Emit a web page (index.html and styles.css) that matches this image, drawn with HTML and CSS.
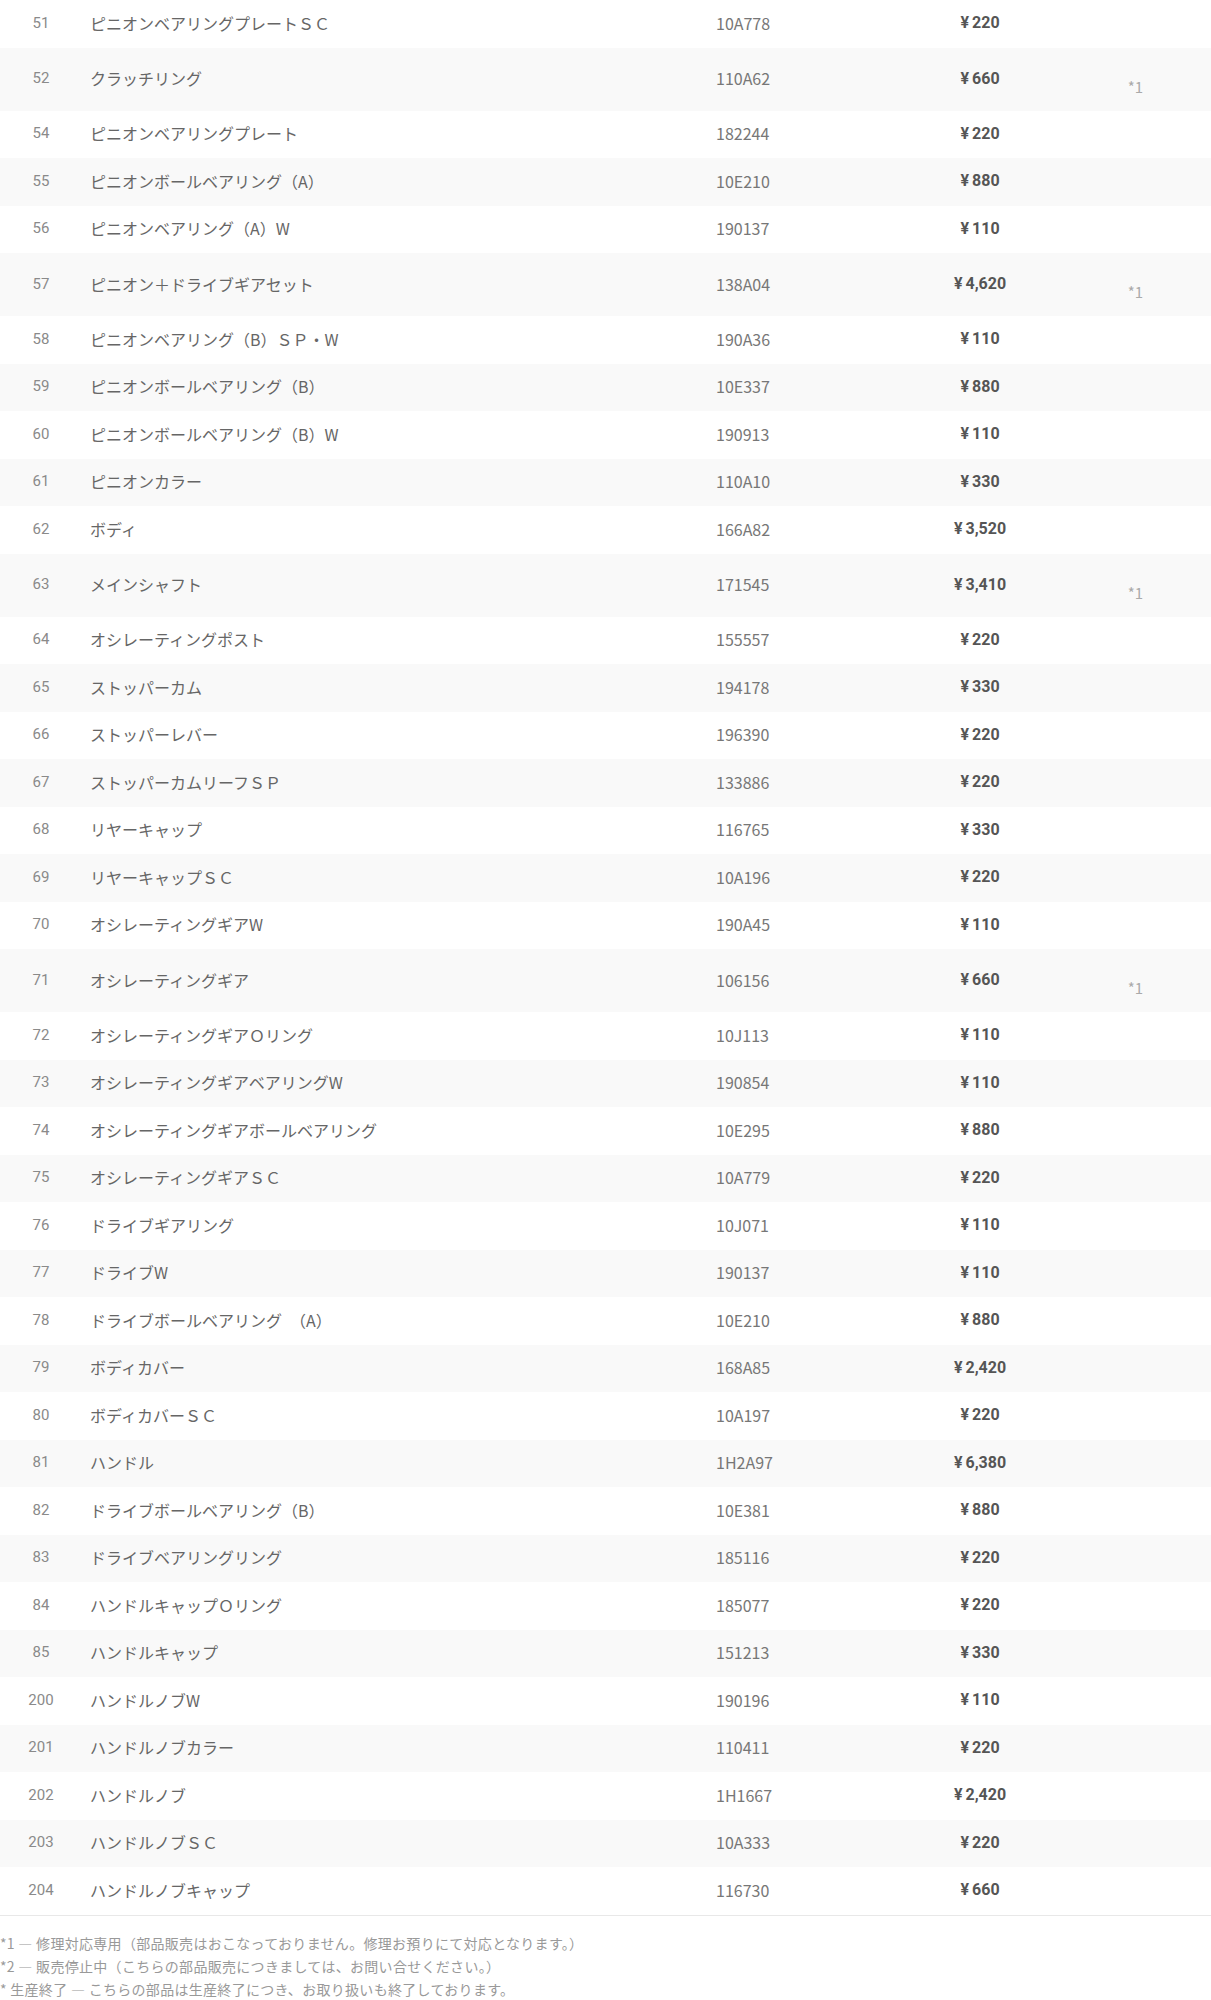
FILE: index.html
```html
<!DOCTYPE html>
<html lang="ja">
<head>
  <meta charset="UTF-8" />
  <meta name="viewport" content="width=device-width, initial-scale=1" />
  <title>パーツリスト</title>
  <link rel="stylesheet" href="styles.css">
</head>
<body>

  <!-- Parts list -->
  <div class="parts-list">
    <div class="part-row"><span class="no">51</span><span class="name">ピニオンベアリングプレートＳＣ</span><span class="code">10A778</span><span class="price"><i>¥</i>220</span><span class="note"></span></div>
    <div class="part-row tall"><span class="no">52</span><span class="name">クラッチリング</span><span class="code">110A62</span><span class="price"><i>¥</i>660</span><span class="note">*1</span></div>
    <div class="part-row"><span class="no">54</span><span class="name">ピニオンベアリングプレート</span><span class="code">182244</span><span class="price"><i>¥</i>220</span><span class="note"></span></div>
    <div class="part-row"><span class="no">55</span><span class="name">ピニオンボールベアリング（A）</span><span class="code">10E210</span><span class="price"><i>¥</i>880</span><span class="note"></span></div>
    <div class="part-row"><span class="no">56</span><span class="name">ピニオンベアリング（A）W</span><span class="code">190137</span><span class="price"><i>¥</i>110</span><span class="note"></span></div>
    <div class="part-row tall"><span class="no">57</span><span class="name">ピニオン＋ドライブギアセット</span><span class="code">138A04</span><span class="price"><i>¥</i>4,620</span><span class="note">*1</span></div>
    <div class="part-row"><span class="no">58</span><span class="name">ピニオンベアリング（B）ＳＰ・W</span><span class="code">190A36</span><span class="price"><i>¥</i>110</span><span class="note"></span></div>
    <div class="part-row"><span class="no">59</span><span class="name">ピニオンボールベアリング（B）</span><span class="code">10E337</span><span class="price"><i>¥</i>880</span><span class="note"></span></div>
    <div class="part-row"><span class="no">60</span><span class="name">ピニオンボールベアリング（B）W</span><span class="code">190913</span><span class="price"><i>¥</i>110</span><span class="note"></span></div>
    <div class="part-row"><span class="no">61</span><span class="name">ピニオンカラー</span><span class="code">110A10</span><span class="price"><i>¥</i>330</span><span class="note"></span></div>
    <div class="part-row"><span class="no">62</span><span class="name">ボディ</span><span class="code">166A82</span><span class="price"><i>¥</i>3,520</span><span class="note"></span></div>
    <div class="part-row tall"><span class="no">63</span><span class="name">メインシャフト</span><span class="code">171545</span><span class="price"><i>¥</i>3,410</span><span class="note">*1</span></div>
    <div class="part-row"><span class="no">64</span><span class="name">オシレーティングポスト</span><span class="code">155557</span><span class="price"><i>¥</i>220</span><span class="note"></span></div>
    <div class="part-row"><span class="no">65</span><span class="name">ストッパーカム</span><span class="code">194178</span><span class="price"><i>¥</i>330</span><span class="note"></span></div>
    <div class="part-row"><span class="no">66</span><span class="name">ストッパーレバー</span><span class="code">196390</span><span class="price"><i>¥</i>220</span><span class="note"></span></div>
    <div class="part-row"><span class="no">67</span><span class="name">ストッパーカムリーフＳＰ</span><span class="code">133886</span><span class="price"><i>¥</i>220</span><span class="note"></span></div>
    <div class="part-row"><span class="no">68</span><span class="name">リヤーキャップ</span><span class="code">116765</span><span class="price"><i>¥</i>330</span><span class="note"></span></div>
    <div class="part-row"><span class="no">69</span><span class="name">リヤーキャップＳＣ</span><span class="code">10A196</span><span class="price"><i>¥</i>220</span><span class="note"></span></div>
    <div class="part-row"><span class="no">70</span><span class="name">オシレーティングギアW</span><span class="code">190A45</span><span class="price"><i>¥</i>110</span><span class="note"></span></div>
    <div class="part-row tall"><span class="no">71</span><span class="name">オシレーティングギア</span><span class="code">106156</span><span class="price"><i>¥</i>660</span><span class="note">*1</span></div>
    <div class="part-row"><span class="no">72</span><span class="name">オシレーティングギアＯリング</span><span class="code">10J113</span><span class="price"><i>¥</i>110</span><span class="note"></span></div>
    <div class="part-row"><span class="no">73</span><span class="name">オシレーティングギアベアリングW</span><span class="code">190854</span><span class="price"><i>¥</i>110</span><span class="note"></span></div>
    <div class="part-row"><span class="no">74</span><span class="name">オシレーティングギアボールベアリング</span><span class="code">10E295</span><span class="price"><i>¥</i>880</span><span class="note"></span></div>
    <div class="part-row"><span class="no">75</span><span class="name">オシレーティングギアＳＣ</span><span class="code">10A779</span><span class="price"><i>¥</i>220</span><span class="note"></span></div>
    <div class="part-row"><span class="no">76</span><span class="name">ドライブギアリング</span><span class="code">10J071</span><span class="price"><i>¥</i>110</span><span class="note"></span></div>
    <div class="part-row"><span class="no">77</span><span class="name">ドライブW</span><span class="code">190137</span><span class="price"><i>¥</i>110</span><span class="note"></span></div>
    <div class="part-row"><span class="no">78</span><span class="name">ドライブボールベアリング　（A）</span><span class="code">10E210</span><span class="price"><i>¥</i>880</span><span class="note"></span></div>
    <div class="part-row"><span class="no">79</span><span class="name">ボディカバー</span><span class="code">168A85</span><span class="price"><i>¥</i>2,420</span><span class="note"></span></div>
    <div class="part-row"><span class="no">80</span><span class="name">ボディカバーＳＣ</span><span class="code">10A197</span><span class="price"><i>¥</i>220</span><span class="note"></span></div>
    <div class="part-row"><span class="no">81</span><span class="name">ハンドル</span><span class="code">1H2A97</span><span class="price"><i>¥</i>6,380</span><span class="note"></span></div>
    <div class="part-row"><span class="no">82</span><span class="name">ドライブボールベアリング（B）</span><span class="code">10E381</span><span class="price"><i>¥</i>880</span><span class="note"></span></div>
    <div class="part-row"><span class="no">83</span><span class="name">ドライブベアリングリング</span><span class="code">185116</span><span class="price"><i>¥</i>220</span><span class="note"></span></div>
    <div class="part-row"><span class="no">84</span><span class="name">ハンドルキャップＯリング</span><span class="code">185077</span><span class="price"><i>¥</i>220</span><span class="note"></span></div>
    <div class="part-row"><span class="no">85</span><span class="name">ハンドルキャップ</span><span class="code">151213</span><span class="price"><i>¥</i>330</span><span class="note"></span></div>
    <div class="part-row"><span class="no">200</span><span class="name">ハンドルノブW</span><span class="code">190196</span><span class="price"><i>¥</i>110</span><span class="note"></span></div>
    <div class="part-row"><span class="no">201</span><span class="name">ハンドルノブカラー</span><span class="code">110411</span><span class="price"><i>¥</i>220</span><span class="note"></span></div>
    <div class="part-row"><span class="no">202</span><span class="name">ハンドルノブ</span><span class="code">1H1667</span><span class="price"><i>¥</i>2,420</span><span class="note"></span></div>
    <div class="part-row"><span class="no">203</span><span class="name">ハンドルノブＳＣ</span><span class="code">10A333</span><span class="price"><i>¥</i>220</span><span class="note"></span></div>
    <div class="part-row"><span class="no">204</span><span class="name">ハンドルノブキャップ</span><span class="code">116730</span><span class="price"><i>¥</i>660</span><span class="note"></span></div>
  </div>

  <!-- Notes -->
  <ul class="legend">
    <li>*1 ― 修理対応専用（部品販売はおこなっておりません。修理お預りにて対応となります。）</li>
    <li>*2 ― 販売停止中（こちらの部品販売につきましては、お問い合せください。）</li>
    <li>* 生産終了 ― こちらの部品は生産終了につき、お取り扱いも終了しております。</li>
  </ul>

</body>
</html>
```

FILE: styles.css
```css
body {
  margin: 0;
  background: #fff;
  color: #666;
  font-family: "Noto Sans CJK JP", "Noto Sans", sans-serif;
}

.parts-list {
  border-bottom: 1px solid #e8e8e8;
}

.part-row {
  display: grid;
  grid-template-columns: 82px 626px 192px 160px 1fr;
  align-items: center;
  height: 47.5px;
  font-size: 16px;
}

.part-row > span {
  margin-top: -2px;
}

.part-row:nth-child(even) {
  background: #f9f9f9;
}

.part-row.tall {
  height: 63px;
}

.no {
  text-align: center;
  font-family: Roboto, "Noto Sans", sans-serif;
  font-size: 15px;
  color: #8a8a8a;
}

.name {
  padding-left: 8px;
  color: #666;
}

.code {
  padding-left: 8px;
  color: #777;
}

.price {
  text-align: center;
  font-family: Roboto, "Noto Sans", sans-serif;
  font-weight: 700;
  font-size: 16px;
  color: #555;
}

.price i {
  font-style: normal;
  margin-right: 3px;
}

.part-row > .note {
  text-align: center;
  font-size: 15px;
  color: #aaa;
  margin-top: 14px;
}

.legend {
  list-style: none;
  margin: 0;
  padding: 16px 0 0;
  font-size: 14px;
  line-height: 23px;
  letter-spacing: 0.3px;
  color: #999;
}
```
